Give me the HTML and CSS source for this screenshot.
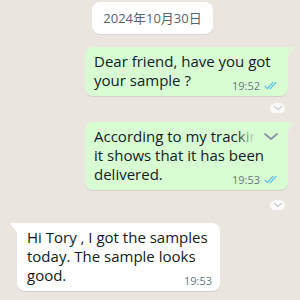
FILE: index.html
```html
<!DOCTYPE html>
<html lang="en">
<head>
<meta charset="utf-8">
<link rel="stylesheet" href="styles.css">
</head>
<body>
<div class="chat">
  <div class="date-row"><span class="date">2024年10月30日</span></div>

  <div class="row out">
    <div class="bubble out">Dear friend, have you got your sample ?<span class="spacer out-sp"></span>
      <span class="meta"><span class="time">19:52</span><svg class="ticks" viewBox="0 0 16 10" width="16" height="10"><path d="M1 5.2 L3.6 7.8 L9.6 1.2 M6.4 7.6 L6.8 7.8 L12.8 1.2" fill="none" stroke="#53bdeb" stroke-width="1.2" stroke-linecap="round" stroke-linejoin="round"/></svg></span>
    </div>
  </div>
  <div class="row react-row"><span class="react"><svg viewBox="0 0 10 6" width="10" height="6"><path d="M1.5 1.5 L5 4.5 L8.5 1.5" fill="none" stroke="#c9ccce" stroke-width="1.3" stroke-linecap="round"/></svg></span></div>

  <div class="row out gap2">
    <div class="bubble out">According to my tracking, it shows that it has been delivered.<span class="spacer out-sp"></span>
      <span class="fade"><svg viewBox="0 0 16 9" width="16" height="9"><path d="M2 2 L8 7 L14 2" fill="none" stroke="#8696a0" stroke-width="1.8" stroke-linecap="round" stroke-linejoin="round"/></svg></span>
      <span class="meta"><span class="time">19:53</span><svg class="ticks" viewBox="0 0 16 10" width="16" height="10"><path d="M1 5.2 L3.6 7.8 L9.6 1.2 M6.4 7.6 L6.8 7.8 L12.8 1.2" fill="none" stroke="#53bdeb" stroke-width="1.2" stroke-linecap="round" stroke-linejoin="round"/></svg></span>
    </div>
  </div>
  <div class="row react-row r2"><span class="react"><svg viewBox="0 0 10 6" width="10" height="6"><path d="M1.5 1.5 L5 4.5 L8.5 1.5" fill="none" stroke="#c9ccce" stroke-width="1.3" stroke-linecap="round"/></svg></span></div>

  <div class="row in gap3">
    <div class="bubble in">Hi Tory , I got the samples today. The sample looks good.<span class="spacer in-sp"></span>
      <span class="meta"><span class="time">19:53</span></span>
    </div>
  </div>
</div>
</body>
</html>
```
FILE: styles.css
```css
html, body {
  margin: 0;
  padding: 0;
  background: #eae6df;
  height: 100%;
  overflow: hidden;
}
.chat {
  display: flex;
  flex-direction: column;
  padding: 2px 12px 0 17px;
  font-family: "Open Sans", "Noto Sans CJK SC", sans-serif;
  color: #111b21;
}
.date-row {
  display: flex;
  justify-content: center;
}
.date {
  height: 32px;
  line-height: 32px;
  padding: 0 11px;
  background: #ffffff;
  border-radius: 8px;
  font-size: 13px;
  color: #54656f;
  box-shadow: 0 1px 0.5px rgba(11, 20, 26, 0.08);
}
.row {
  display: flex;
}
.row.out {
  justify-content: flex-end;
  margin-top: 13px;
}
.row.in {
  justify-content: flex-start;
}
.row.gap2 { margin-top: 9px; }
.row.gap3 { margin-top: 13px; }
.bubble {
  position: relative;
  max-width: 203px;
  box-sizing: border-box;
  padding: 5px 9px 6px 9px;
  font-size: 15px;
  line-height: 19px;
  border-radius: 8px;
  box-shadow: 0 1px 0.5px rgba(11, 20, 26, 0.1);
}
.bubble.out {
  background: #d9fdd3;
  border-top-right-radius: 0;
}
.bubble.out::after {
  content: "";
  position: absolute;
  top: 0;
  right: -7px;
  width: 8px;
  height: 11px;
  background: #d9fdd3;
  clip-path: polygon(0 0, 100% 0, 0 100%);
  opacity: 0.6;
}
.bubble.in {
  background: #ffffff;
  border-top-left-radius: 0;
  padding-left: 10px;
  padding-right: 10px;
}
.bubble.in::before {
  content: "";
  position: absolute;
  top: 0;
  left: -7px;
  width: 8px;
  height: 11px;
  background: #ffffff;
  clip-path: polygon(0 0, 100% 0, 100% 100%);
}
.spacer {
  display: inline-block;
  height: 1px;
}
.out-sp { width: 52px; }
.in-sp { width: 36px; }
.meta {
  position: absolute;
  right: 9px;
  bottom: 3px;
  display: flex;
  align-items: center;
  gap: 4px;
  height: 15px;
}
.bubble.in .meta { right: 8px; }
.time {
  font-size: 11px;
  line-height: 15px;
  color: #667781;
}
.ticks {
  display: block;
  width: 15px;
  height: 10px;
  margin-top: 1px;
}
.fade {
  position: absolute;
  top: 5px;
  right: 8px;
  width: 44px;
  height: 19px;
  display: flex;
  align-items: center;
  justify-content: flex-end;
  background: linear-gradient(to right, rgba(217, 253, 211, 0), #d9fdd3 45%);
}
.fade svg {
  display: block;
  margin-right: 1px;
}
.react-row {
  justify-content: flex-end;
  margin-top: 7px;
  padding-right: 3px;
}
.react-row.r2 { margin-top: 10px; }
.react {
  display: flex;
  align-items: center;
  justify-content: center;
  width: 15px;
  height: 10px;
  border-radius: 6px 6px 5px 5px;
  background: rgba(255, 255, 255, 0.8);
}
.react svg { display: block; }
```
